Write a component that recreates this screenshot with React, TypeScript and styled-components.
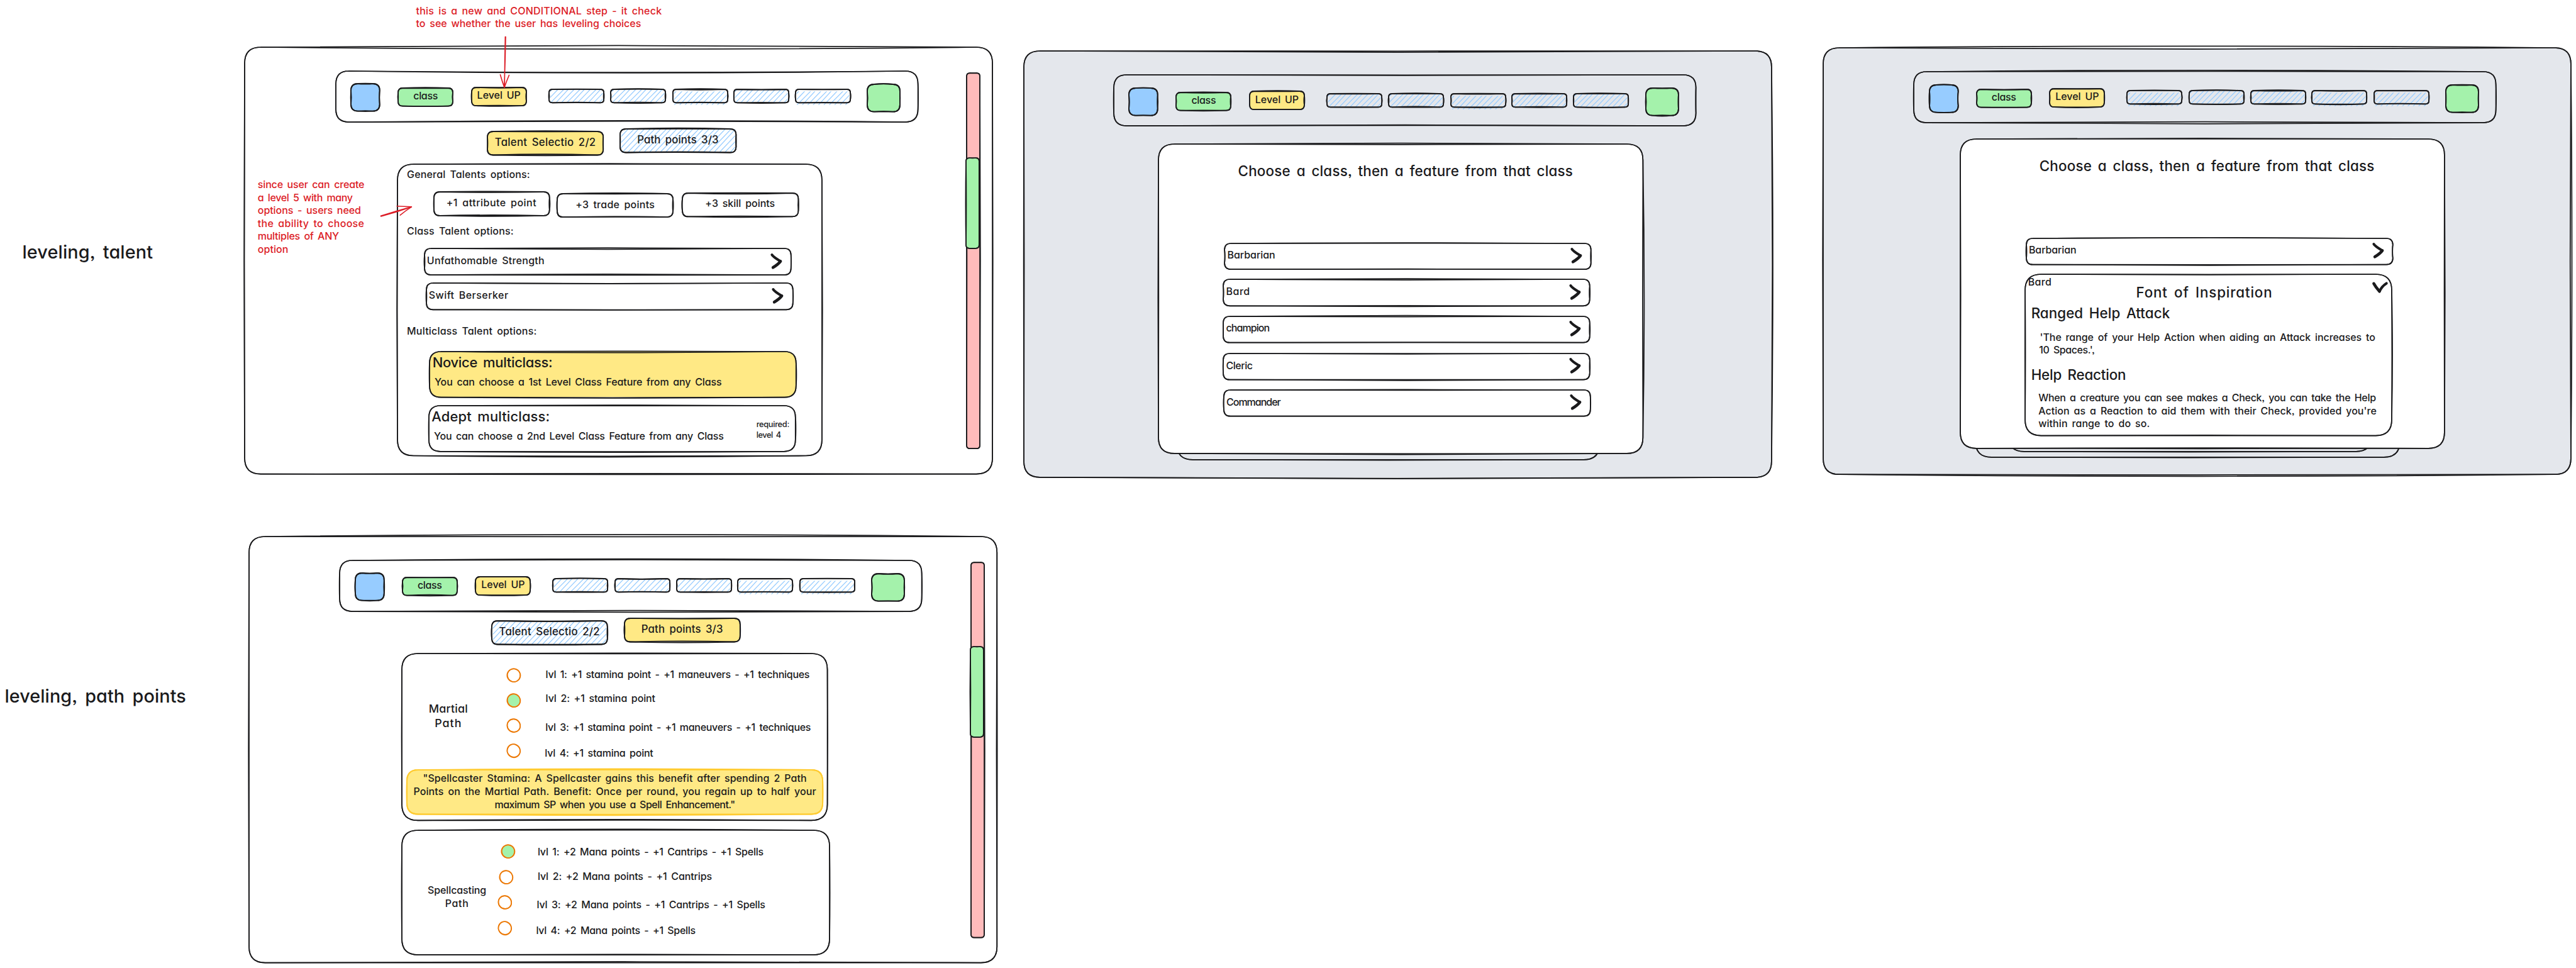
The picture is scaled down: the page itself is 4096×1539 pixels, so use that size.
import React, { useLayoutEffect, useRef, useState } from "react";
import styled, { createGlobalStyle } from "styled-components";

const INK = "#1a1a1c";
const RED = "#dc1c26";
const BLUE = "#97ccff";
const GREEN = "#a4f2ab";
const YELLOW = "#ffe985";
const PINK = "#ffbbbb";
const GREY = "#e4e7ec";
const ORANGE = "#ec7a08";
const AMBER = "#ffcb30";

const Global = createGlobalStyle`
  html, body { margin: 0; padding: 0; background: #fff; overflow: hidden; }
  * { box-sizing: border-box; }
`;

const Board = styled.main`
  position: relative;
  width: 4969px;
  height: 1867px;
  zoom: ${4096 / 4969};
  overflow: hidden;
  background: #fff;
  color: ${INK};
  font-family: Inter, "Open Sans", sans-serif;
  font-feature-settings: "cv11", "ss03";
  font-weight: 500;
`;

/* ---------- hand-drawn outline ---------- */

type Bow = [number, number, number, number, number, number, number, number];

const Overlay = styled.svg`
  position: absolute;
  inset: 0;
  overflow: visible;
  pointer-events: none;
`;

function seeded(seed: number) {
  let s = (seed * 9301 + 49297) % 233280;
  return () => {
    s = (s * 9301 + 49297) % 233280;
    return s / 233280;
  };
}

const cornerOf = (w: number, h: number) => Math.min(Math.min(w, h) * 0.25, 31);

function outline(w: number, h: number, t: number, r: number, b: number, l: number) {
  const c = cornerOf(w, h);
  const k = 1 / 0.75;
  return [
    `M${c} 0`,
    `C${w * 0.35} ${t * k} ${w * 0.65} ${t * k} ${w - c} 0`,
    `Q${w} 0 ${w} ${c}`,
    `C${w + r * k} ${h * 0.35} ${w + r * k} ${h * 0.65} ${w} ${h - c}`,
    `Q${w} ${h} ${w - c} ${h}`,
    `C${w * 0.65} ${h + b * k} ${w * 0.35} ${h + b * k} ${c} ${h}`,
    `Q0 ${h} 0 ${h - c}`,
    `C${l * k} ${h * 0.65} ${l * k} ${h * 0.35} 0 ${c}`,
    `Q0 0 ${c} 0`,
  ].join(" ");
}

function Sketch({ w, h, seed = 1, bow, stroke = INK, hatch, drop = 0, weight = 2.1 }: {
  w: number; h: number; seed?: number; bow?: Bow; stroke?: string; hatch?: boolean; drop?: number; weight?: number;
}) {
  const rnd = seeded(seed);
  const amp = (len: number) => Math.min(1.6, len * 0.007 + 0.35);
  const b: number[] = bow ?? [w, w, h, h, w, w, h, h].map((len) => (rnd() * 2 - 1) * amp(len));
  const lines: number[] = [];
  for (let x = -h + 6; x < w; x += 10.4) lines.push(x);
  return (
    <Overlay width={w} height={h} viewBox={`0 0 ${w} ${h}`} fill="none" strokeLinecap="round">
      {hatch && (
        <svg x={2} y={drop} width={w - 4} height={h} overflow="hidden">
          {lines.map((x, i) => (
            <path key={x} d={`M${x} ${h} L${x + h * 0.92 + (i % 3)} 0`} stroke={BLUE} strokeWidth={1.5} />
          ))}
        </svg>
      )}
      <path d={outline(w, h, b[0], b[2], b[4], b[6])} stroke={stroke} strokeWidth={weight} />
      <path d={outline(w, h, b[1], b[3], b[5], b[7])} stroke={stroke} strokeWidth={weight} />
    </Overlay>
  );
}

/* ---------- text ---------- */

const Line = styled.span<{ $size: number; $x?: number; $y?: number }>`
  display: block;
  align-self: flex-start;
  flex: none;
  width: max-content;
  white-space: nowrap;
  margin: ${(p) => p.$y ?? 0}px 0 0 ${(p) => p.$x ?? 0}px;
  font-size: ${(p) => p.$size * 0.97}px;
  line-height: ${(p) => p.$size * 1.25}px;
  word-spacing: 0.16em;
  position: relative;
`;

const CenteredLine = styled(Line)`
  align-self: center;
`;

/** One line of lettering, tracked so that it spans `span` pixels. */
function Text({ children, span, size = 20, x, y, center }: {
  children: string; span: number; size?: number; x?: number; y?: number; center?: boolean;
}) {
  const ref = useRef<HTMLSpanElement>(null);
  const [track, setTrack] = useState(0);
  useLayoutEffect(() => {
    const el = ref.current;
    if (!el) return;
    el.style.letterSpacing = "0px";
    const scale = 4096 / 4969;
    const probe = document.createElement("span");
    probe.style.cssText = "position:absolute;visibility:hidden;display:block;width:1000px;height:1px";
    el.appendChild(probe);
    const unit = probe.getBoundingClientRect().width / 1000 || scale;
    el.removeChild(probe);
    const natural = el.getBoundingClientRect().width / unit;
    const next = (span - natural) / children.length;
    el.style.letterSpacing = `${next}px`;
    setTrack(next);
  }, [children, span, size]);
  const Tag = center ? CenteredLine : Line;
  return (
    <Tag ref={ref} $size={size} $x={x} $y={y} style={{ letterSpacing: track }}>
      {children}
    </Tag>
  );
}

/* ---------- surfaces ---------- */

interface Place { $w: number; $h: number; $x?: number; $y?: number; $fill?: string }

const Surface = styled.div<Place>`
  position: relative;
  flex: none;
  width: ${(p) => p.$w}px;
  height: ${(p) => p.$h}px;
  margin: ${(p) => p.$y ?? 0}px 0 0 ${(p) => p.$x ?? 0}px;
  background: ${(p) => p.$fill ?? "transparent"};
  border-radius: ${(p) => cornerOf(p.$w, p.$h) * 0.8}px;
`;

const FrameBox = styled(Surface)<{ $left: number; $top: number }>`
  position: absolute;
  left: ${(p) => p.$left}px;
  top: ${(p) => p.$top}px;
  display: flex;
`;

const FrameMain = styled.div`
  display: flex;
  flex-direction: column;
  flex: none;
  width: 1392px;
`;

const Bar = styled(Surface)`
  display: flex;
  align-items: flex-start;
`;

const ChipBox = styled(Surface)`
  display: flex;
  flex-direction: column;
  justify-content: center;
  padding-bottom: 2px;
`;

const PanelBox = styled(Surface)`
  display: flex;
  flex-direction: column;
`;

const RowBox = styled(Surface)`
  display: flex;
  align-items: center;
  justify-content: space-between;
  padding: 0 17px 2px 5px;
`;

const RowText = styled.div`
  display: flex;
`;

const CardBody = styled(Surface)`
  display: flex;
  align-items: flex-start;
`;

const CardColumn = styled.div<{ $w?: number }>`
  display: flex;
  flex-direction: column;
  flex: none;
  width: ${(p) => (p.$w ? `${p.$w}px` : "auto")};
`;

const Inline = styled.div`
  display: flex;
  align-items: flex-start;
`;

const ModalStack = styled.div<{ $x: number; $y: number }>`
  position: relative;
  margin: ${(p) => p.$y}px 0 0 ${(p) => p.$x}px;
  width: 934px;
`;

const PeekBox = styled.div<{ $x: number; $below: number }>`
  position: absolute;
  left: ${(p) => p.$x}px;
  bottom: ${(p) => -p.$below}px;
`;

const ScrollTrack = styled(Surface)`
  border-radius: 5px;
`;

const ScrollThumb = styled(Surface)`
  border-radius: 5px;
  margin-top: 0;
`;

/* ---------- icons ---------- */

const Glyph = styled.svg<{ $x?: number; $y?: number }>`
  flex: none;
  margin: ${(p) => p.$y ?? 0}px 0 0 ${(p) => p.$x ?? 0}px;
  overflow: visible;
`;

const ChevronRight = () => (
  <Glyph width={23} height={31} viewBox="0 0 23 31" fill="none" stroke={INK} strokeLinejoin="round" strokeLinecap="round">
    <path d="M3 2.5 C6 7 13 11 19.5 15" strokeWidth={5} />
    <path d="M19.5 15 C16 20 10 24 5 27" strokeWidth={5.6} />
  </Glyph>
);

const ChevronDown = ({ x, y }: { x: number; y: number }) => (
  <Glyph $x={x} $y={y} width={30} height={22} viewBox="0 0 30 22" fill="none" stroke={INK} strokeLinejoin="round" strokeLinecap="round">
    <path d="M3 3.5 C6 9 10 14 14 18.5" strokeWidth={5.6} />
    <path d="M14 18.5 C17 12 21 7 27.5 3" strokeWidth={5} />
  </Glyph>
);

const Note = styled.div<{ $left: number; $top: number }>`
  position: absolute;
  left: ${(p) => p.$left}px;
  top: ${(p) => p.$top}px;
  display: flex;
  flex-direction: column;
  color: ${RED};
`;

const RowLabel = styled(Note)`
  color: ${INK};
`;

const ArrowLayer = styled.svg`
  position: absolute;
  left: 0;
  top: 0;
  pointer-events: none;
`;

/* ---------- pieces ---------- */

function Chip({ w, h, x, y, fill, hatch, label, span, size, seed = 3, drop }: {
  w: number; h: number; x?: number; y?: number; fill?: string; hatch?: boolean;
  label?: string; span?: number; size?: number; seed?: number; drop?: number;
}) {
  return (
    <ChipBox $w={w} $h={h} $x={x} $y={y} $fill={fill}>
      <Sketch w={w} h={h} seed={seed} hatch={hatch} drop={drop} weight={2.2} />
      {label && <Text center span={span ?? 50} size={size}>{label}</Text>}
    </ChipBox>
  );
}

function StepBar({ x, bow, seed, drops }: { x: number; bow: Bow; seed: number; drops: number[] }) {
  const gaps = [43.7, 13.6, 13.9, 12.2, 13.5];
  return (
    <Bar $w={1123} $h={98.3} $x={x} $y={46}>
      <Sketch w={1123} h={98.3} bow={bow} />
      <Chip w={55.5} h={53} x={29.5} y={25.2} fill={BLUE} seed={seed + 1} />
      <Chip w={105.5} h={34.7} x={35.6} y={33.4} fill={GREEN} label="class" span={47} seed={seed + 2} />
      <Chip w={105.5} h={35.3} x={36} y={31.7} fill={YELLOW} label="Level UP" span={84} seed={seed + 3} />
      {gaps.map((gap, i) => (
        <Chip key={gap} w={105.7} h={26} x={gap} y={35.6} hatch drop={drops[i]} seed={seed + 5 + i} />
      ))}
      <Chip w={63} h={53} x={33} y={25.4} fill={GREEN} seed={seed + 12} />
    </Bar>
  );
}

function Scroll({ h, y, thumbY }: { h: number; y: number; thumbY: number }) {
  return (
    <ScrollTrack $w={25.5} $h={h} $y={y} $fill={PINK}>
      <Sketch w={25.5} h={h} seed={4} bow={[0, 0.5, 0, 1, 0, 0, 0, 0.5]} />
      <ScrollThumb $w={25.3} $h={174.5} $x={-1} $fill={GREEN} style={{ top: thumbY }}>
        <Sketch w={25.3} h={174.5} seed={8} bow={[0, 0.5, 0, 1, 0, 0.5, -0.7, 0.5]} />
      </ScrollThumb>
    </ScrollTrack>
  );
}

function ListRow({ x, y, h = 50.5, label, span, seed }: {
  x: number; y: number; h?: number; label: string; span: number; seed: number;
}) {
  return (
    <RowBox $w={707} $h={h} $x={x} $y={y}>
      <Sketch w={707} h={h} seed={seed} />
      <RowText><Text span={span}>{label}</Text></RowText>
      <ChevronRight />
    </RowBox>
  );
}

function Peek({ x, below, w }: { x: number; below: number; w: number }) {
  return (
    <PeekBox $x={x} $below={below}>
      <Surface $w={w} $h={160} $fill={GREY}>
        <Sketch w={w} h={160} bow={[0, 0, 0, 0, 1, 0, 0, 0]} />
      </Surface>
    </PeekBox>
  );
}

/* ---------- level lists ---------- */

const LevelItem = styled.div<{ $h: number }>`
  display: flex;
  align-items: flex-start;
  height: ${(p) => p.$h}px;
`;

const LevelList = styled.div<{ $y: number }>`
  display: flex;
  flex-direction: column;
  margin-top: ${(p) => p.$y}px;
`;

const PathName = styled.div<{ $x: number; $y: number; $w: number }>`
  display: flex;
  flex-direction: column;
  flex: none;
  width: ${(p) => p.$w}px;
  margin: ${(p) => p.$y}px 0 0 ${(p) => p.$x}px;
`;

const PathRow = styled.div<{ $h: number }>`
  display: flex;
  align-items: flex-start;
  height: ${(p) => p.$h}px;
`;

interface Level { dot: number; gap: number; y: number; text: string; span: number; on?: boolean }

function Dot({ x, on, tilt }: { x: number; on?: boolean; tilt: number }) {
  return (
    <Glyph $x={x} width={26.5} height={26} viewBox="0 0 26.5 26">
      <ellipse cx={13.2} cy={13} rx={12.9} ry={12.4} fill={on ? GREEN : "#fff"} stroke={ORANGE} strokeWidth={2} transform={`rotate(${tilt} 13 13)`} />
      <ellipse cx={13.4} cy={12.9} rx={12.3} ry={12.9} fill="none" stroke={ORANGE} strokeWidth={1.8} transform={`rotate(${-tilt} 13 13)`} />
    </Glyph>
  );
}

function Levels({ items, pitch, y }: { items: Level[]; pitch: number; y: number }) {
  return (
    <LevelList $y={y}>
      {items.map((it, i) => (
        <LevelItem key={it.text} $h={pitch}>
          <Dot x={it.dot} on={it.on} tilt={12 + i * 17} />
          <Text x={it.gap} y={it.y} span={it.span}>{it.text}</Text>
        </LevelItem>
      ))}
    </LevelList>
  );
}

const martial: Level[] = [
  { dot: 75.1, gap: 48.6, y: 0.2, span: 509, text: "lvl 1: +1 stamina point - +1 maneuvers - +1 techniques" },
  { dot: 75.1, gap: 48.6, y: -2.8, span: 211.5, text: "lvl 2: +1 stamina point", on: true },
  { dot: 75.1, gap: 48, y: 4.6, span: 512, text: "lvl 3: +1 stamina point - +1 maneuvers - +1 techniques" },
  { dot: 75.1, gap: 47, y: 5.4, span: 209, text: "lvl 4: +1 stamina point" },
];

const spell: Level[] = [
  { dot: 29.5, gap: 43.2, y: 2.8, span: 435.5, text: "lvl 1: +2 Mana points - +1 Cantrips - +1 Spells", on: true },
  { dot: 25.2, gap: 47.5, y: 0.3, span: 336, text: "lvl 2: +2 Mana points - +1 Cantrips" },
  { dot: 22.9, gap: 48.1, y: 5.8, span: 440.5, text: "lvl 3: +2 Mana points - +1 Cantrips - +1 Spells" },
  { dot: 22.9, gap: 46.8, y: 6.3, span: 307.5, text: "lvl 4: +2 Mana points - +1 Spells" },
];

/* ---------- frames ---------- */

function TalentFrame() {
  return (
    <FrameBox $left={472.5} $top={90.7} $w={1442.5} $h={823.3}>
      <Sketch w={1442.5} h={823.3} bow={[-3.2, 4, 0, 0.8, -1, 1, -1, -0.6]} />
      <FrameMain>
        <StepBar x={175} seed={10} bow={[3.6, 2.6, 0.5, 0, -2.6, -1.8, 0, 0]} drops={[0, 0, 4, 0, 4]} />
        <Inline>
          <Chip w={223.5} h={45.5} x={467.7} y={18.5} fill={YELLOW} label="Talent Selectio 2/2" span={195} size={21} seed={31} />
          <Chip w={223.8} h={45.5} x={32.1} y={13.7} hatch label="Path points 3/3" span={157} size={21} seed={32} />
        </Inline>
        <PanelBox $w={818.8} $h={562.3} $x={294} $y={17.7}>
          <Sketch w={818.8} h={562.3} bow={[-1, 0, 1, 0, 2.5, 1, -1, -0.5]} />
          <Text x={18.5} y={8.8} span={237.5}>General Talents options:</Text>
          <Inline>
            <Chip w={223} h={46} x={70} y={20.2} label="+1 attribute point" span={174} seed={33} />
            <Chip w={223.3} h={45} x={15.6} y={23.5} label="+3 trade points" span={153} seed={34} />
            <Chip w={223.8} h={45.3} x={17.4} y={21.5} label="+3 skill points" span={134.5} seed={35} />
          </Inline>
          <Text x={18.5} y={15} span={206}>Class Talent options:</Text>
          <ListRow x={52} y={20.8} h={51} label="Unfathomable Strength" span={227} seed={41} />
          <ListRow x={55.5} y={15.4} h={51.3} label="Swift Berserker" span={154} seed={42} />
          <Text x={18.5} y={29.6} span={250.5}>Multiclass Talent options:</Text>
          <CardBody $w={707} $h={88} $x={62.2} $y={26} $fill={YELLOW}>
            <Sketch w={707} h={88} bow={[-0.8, 2, 0.8, 0, 1.6, 1, -0.5, 0]} />
            <CardColumn>
              <Text x={5.5} y={3.6} size={27.5} span={231.5}>Novice multiclass:</Text>
              <Text x={9.5} y={9} span={554}>You can choose a 1st Level Class Feature from any Class</Text>
            </CardColumn>
          </CardBody>
          <CardBody $w={707} $h={88.3} $x={60.5} $y={16.4}>
            <Sketch w={707} h={88.3} bow={[-1.2, 0.3, 0.8, 0, 1.6, 0.4, -0.5, 0]} />
            <CardColumn $w={632}>
              <Text x={5.6} y={4.2} size={27.5} span={228}>Adept multiclass:</Text>
              <Text x={10} y={9} span={559}>You can choose a 2nd Level Class Feature from any Class</Text>
            </CardColumn>
            <CardColumn>
              <Text y={27} size={16} span={63.5}>required:</Text>
              <Text size={16} span={47.5}>level 4</Text>
            </CardColumn>
          </CardBody>
        </PanelBox>
      </FrameMain>
      <Scroll h={724.5} y={50} thumbY={163.3} />
    </FrameBox>
  );
}

const TITLE = "Choose a class, then a feature from that class";

function ClassListFrame() {
  return (
    <FrameBox $left={1974.4} $top={98.6} $w={1442.3} $h={822.3} $fill={GREY}>
      <Sketch w={1442.3} h={822.3} bow={[0.3, 2.5, 1.5, 2.5, 2.8, 2.2, 0.6, -0.4]} />
      <FrameMain>
        <StepBar x={174} seed={50} bow={[0.4, 1, 0, -0.5, -1.6, -0.8, -0.5, 0]} drops={[0, 0, 4, 0, 0]} />
        <ModalStack $x={260} $y={35.2}>
          <Peek x={35} below={11.5} w={816} />
          <PanelBox $w={934.6} $h={596.8} $fill="#fff">
            <Sketch w={934.6} h={596.8} bow={[-1.6, 1, 2.4, -0.6, 2, 0.6, -0.8, 0.4]} />
            <Text x={153.8} y={34.5} size={28} span={646}>{TITLE}</Text>
            <ListRow x={128} y={121.9} h={50} label="Barbarian" span={92.5} seed={51} />
            <ListRow x={125.6} y={19.2} h={51.4} label="Bard" span={46.5} seed={52} />
            <ListRow x={125.6} y={19.9} label="champion" span={83.5} seed={53} />
            <ListRow x={125.6} y={21.3} label="Cleric" span={51} seed={54} />
            <ListRow x={126.3} y={20.3} label="Commander" span={104} seed={55} />
          </PanelBox>
        </ModalStack>
      </FrameMain>
    </FrameBox>
  );
}

function ClassDetailFrame() {
  return (
    <FrameBox $left={3517.4} $top={92.8} $w={1442.3} $h={822.8} $fill={GREY}>
      <Sketch w={1442.3} h={822.8} bow={[-3.4, 2.7, -1.4, 2, 1, 3.8, -1, 0]} />
      <FrameMain>
        <StepBar x={174.6} seed={70} bow={[-2.8, -0.8, 0, 0.4, -1.6, 2.2, -0.5, 0]} drops={[4, 0, 0, 4, 4]} />
        <ModalStack $x={263.6} $y={31.5}>
          <Peek x={30} below={16.1} w={819} />
          <Peek x={93} below={6.1} w={702} />
          <PanelBox $w={934} $h={596.6} $fill="#fff">
            <Sketch w={934} h={596.6} bow={[-1.4, 0, 1, -0.4, 0.6, -0.8, 0.8, 0]} />
            <Text x={152.8} y={34.8} size={28} span={646.5}>{TITLE}</Text>
            <ListRow x={127.6} y={121} label="Barbarian" span={91.5} seed={71} />
            <PanelBox $w={707.3} $h={311.3} $x={125} $y={19}>
              <Sketch w={707.3} h={311.3} bow={[0.4, 1, 1.2, 0.4, 0, -0.8, 0.6, -0.2]} />
              <Inline>
                <Text x={6} y={4} span={45.6}>Bard</Text>
                <Text x={162.8} y={17.9} size={28} span={263.3}>Font of Inspiration</Text>
                <ChevronDown x={191.8} y={14.6} />
              </Inline>
              <Text x={12} y={5} size={28} span={267.6}>Ranged Help Attack</Text>
              <Text x={28.8} y={17.1} span={647}>'The range of your Help Action when aiding an Attack increases to</Text>
              <Text x={27.4} span={107}>10 Spaces.',</Text>
              <Text x={12} y={17.1} size={28} span={182.7}>Help Reaction</Text>
              <Text x={26} y={15} span={651}>When a creature you can see makes a Check, you can take the Help</Text>
              <Text x={26} span={652.5}>Action as a Reaction to aid them with their Check, provided you're</Text>
              <Text x={26} span={215}>within range to do so.</Text>
            </PanelBox>
          </PanelBox>
        </ModalStack>
      </FrameMain>
    </FrameBox>
  );
}

function PathFrame() {
  return (
    <FrameBox $left={481} $top={1034.5} $w={1442.8} $h={822}>
      <Sketch w={1442.8} h={822} bow={[-4, 0.4, -1, 0.4, -2, 0, -1, 0]} />
      <FrameMain>
        <StepBar x={174.6} seed={90} bow={[-3, -1.4, 0, 0.4, -1.8, 1.6, -0.5, 0]} drops={[0, 0, 0, 4, 4]} />
        <Inline>
          <Chip w={223} h={45.5} x={467.4} y={18.3} hatch label="Talent Selectio 2/2" span={194.5} size={21} seed={91} />
          <Chip w={223} h={45.5} x={33} y={13.2} fill={YELLOW} label="Path points 3/3" span={157.5} size={21} seed={92} />
        </Inline>
        <PanelBox $w={820.8} $h={322} $x={294.4} $y={18.4}>
          <Sketch w={820.8} h={322} bow={[-0.8, 0.6, 0, 0.6, -1.8, -0.6, -0.5, 0]} />
          <PathRow $h={224.3}>
            <PathName $x={51.8} $y={91.5} $w={75.2}>
              <Text center size={22.4} span={75.2}>Martial</Text>
              <Text center size={22.4} span={52.3}>Path</Text>
            </PathName>
            <Levels items={martial} pitch={48.6} y={28.6} />
          </PathRow>
          <PanelBox $w={802} $h={85.4} $x={9.6} $fill={YELLOW}>
            <Sketch w={802} h={85.4} stroke={AMBER} weight={2.4} bow={[-2, -0.4, 0.3, 0, 2.2, 0.6, -0.3, 0]} />
            <Text center y={5} span={740.5}>{'"Spellcaster Stamina: A Spellcaster gains this benefit after spending 2 Path'}</Text>
            <Text center span={777}>Points on the Martial Path. Benefit: Once per round, you regain up to half your</Text>
            <Text center span={463.5}>{'maximum SP when you use a Spell Enhancement."'}</Text>
          </PanelBox>
        </PanelBox>
        <PanelBox $w={825} $h={240.3} $x={294} $y={19}>
          <Sketch w={825} h={240.3} bow={[-2, -0.4, 0, 0.6, 0, -1, -0.5, 0]} />
          <PathRow $h={240}>
            <PathName $x={50} $y={104.1} $w={113}>
              <Text center span={113}>Spellcasting</Text>
              <Text center span={46}>Path</Text>
            </PathName>
            <Levels items={spell} pitch={49.5} y={27} />
          </PathRow>
        </PanelBox>
      </FrameMain>
      <Scroll h={724} y={50} thumbY={163} />
    </FrameBox>
  );
}

export default function App() {
  return (
    <>
      <Global />
      <Board>
        <RowLabel $left={43} $top={463.5}><Text size={36} span={252}>leveling, talent</Text></RowLabel>
        <RowLabel $left={9} $top={1320.4}><Text size={36} span={350}>leveling, path points</Text></RowLabel>
        <TalentFrame />
        <ClassListFrame />
        <ClassDetailFrame />
        <PathFrame />
        <Note $left={802.6} $top={9.5}>
          <Text span={474}>this is a new and CONDITIONAL step - it check</Text>
          <Text span={434}>to see whether the user has leveling choices</Text>
        </Note>
        <Note $left={497.2} $top={344.5}>
          <Text span={205.5}>since user can create</Text>
          <Text span={183}>a level 5 with many</Text>
          <Text span={199}>options - users need</Text>
          <Text span={205.5}>the ability to choose</Text>
          <Text span={156.5}>multiples of ANY</Text>
          <Text span={59}>option</Text>
        </Note>
        <ArrowLayer width={1000} height={440} fill="none" stroke={RED} strokeWidth={2} strokeLinecap="round">
          <path d="M975.4 71 Q974.4 120 972.7 168 M974.6 71 Q973.6 120 973.2 168" />
          <path d="M965 144 Q969 158 972.9 168.5 M982 145 Q977 157 972.9 168.5" />
          <path d="M734.4 416.4 Q765 407 793.8 399 M735 417.3 Q765 409 793.8 399" />
          <path d="M765.7 397.6 Q780 398 793.8 399 M771.8 415 Q783 406 793.8 399" />
        </ArrowLayer>
      </Board>
    </>
  );
}
